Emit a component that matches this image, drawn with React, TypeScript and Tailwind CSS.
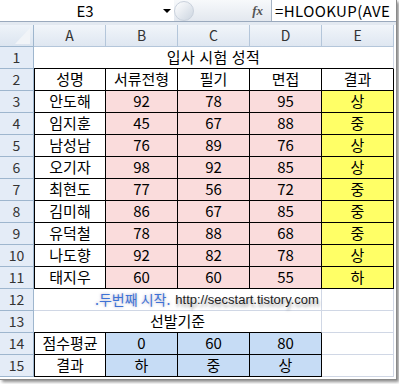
import React from "react";

const rows: [string, number, number, number, string][] = [
    ["안도해", 92, 78, 95, "상"],
    ["임지훈", 45, 67, 88, "중"],
    ["남성남", 76, 89, 76, "상"],
    ["오기자", 98, 92, 85, "상"],
    ["최현도", 77, 56, 72, "중"],
    ["김미해", 86, 67, 85, "중"],
    ["유덕철", 78, 88, 68, "중"],
    ["나도향", 92, 82, 78, "상"],
    ["태지우", 60, 60, 55, "하"],
];

const rowHead = "h-[22px] flex items-center justify-center bg-[#e4ecf7] border-r border-b border-[#9eb6ce] text-[14px] text-[#333]";
const grid = "h-[22px] flex items-center justify-center border-r border-b border-[#d0d7e5]";
const boxed = "h-[22px] flex items-center justify-center border-r border-b border-black text-[15px]";

const RowNum = ({ n }: { n: number }) => <div className={rowHead}>{n}</div>;

const FormulaBar = () => (
    <div className="flex h-[22px] border-b border-[#9aa9bd] bg-white">
        <div className="w-[174px] flex items-center">
            <div className="w-[160px] pl-[10px] text-center text-[15px] leading-none">E3</div>
            <div className="w-[14px] flex items-center">
                <div className="ml-[3px] w-0 h-0 border-l-[4px] border-r-[4px] border-t-[4px] border-l-transparent border-r-transparent border-t-black" />
            </div>
        </div>
        <div className="w-[97px] flex items-center bg-gradient-to-b from-[#f7f9fb] to-[#e3e8ef]">
            <div className="w-[20px] h-[20px] rounded-full border border-[#c9d1dc] bg-gradient-to-br from-[#ffffff] to-[#ccd5e0]" />
            <div className="flex-1 pr-[8px] text-right font-['Liberation_Serif',serif] italic font-bold text-[13px] text-[#555]">
                fx
            </div>
        </div>
        <div className="flex-1 border-l border-[#a5b3c4] pl-[3px] flex items-center overflow-hidden whitespace-nowrap text-[15px] leading-none tracking-[0.4px]">
            =HLOOKUP(AVE
        </div>
    </div>
);

export default function App() {
    return (
        <div className="w-[399px] h-[384px] bg-white font-['Noto_Sans_CJK_KR',sans-serif] text-black">
            <div className="w-[397px] h-[380px] border-r border-b border-[#8a8a8a] shadow-[2px_2px_3px_rgba(0,0,0,0.45)] bg-white overflow-hidden">
                <FormulaBar />
                <div className="h-[3px] bg-[#e3e9f1]" />
                <div className="grid grid-cols-[34px_repeat(5,72px)] w-[394px]">
                    {/* column headers */}
                    <div className="h-[22px] relative bg-gradient-to-b from-[#eef3f9] to-[#dce5f0] border-r border-b border-[#9eb6ce]">
                        <svg width="34" height="22" className="absolute left-0 top-0">
                            <polygon points="30,3 30,19 15,19" fill="#f1f4f8" />
                        </svg>
                    </div>
                    {["A", "B", "C", "D", "E"].map((c) => (
                        <div
                            key={c}
                            className="h-[22px] flex items-center justify-center bg-gradient-to-b from-[#f1f5fa] to-[#dfe7f1] border-r border-b border-[#b4c6da] text-[14px] text-[#333]"
                        >
                            {c}
                        </div>
                    ))}

                    <RowNum n={1} />
                    <div className="col-span-5 h-[22px] flex items-center justify-center border-r border-b border-r-[#d0d7e5] border-b-black text-[15px] tracking-[0.5px]">
                        입사 시험 성적
                    </div>

                    <RowNum n={2} />
                    <div className={`${boxed} border-l`}>성명</div>
                    <div className={boxed}>서류전형</div>
                    <div className={boxed}>필기</div>
                    <div className={boxed}>면접</div>
                    <div className={boxed}>결과</div>

                    {rows.map(([name, a, b, c, res], i) => (
                        <React.Fragment key={name}>
                            <RowNum n={i + 3} />
                            <div className={`${boxed} border-l`}>{name}</div>
                            <div className={`${boxed} bg-[#fadcdc]`}>{a}</div>
                            <div className={`${boxed} bg-[#fadcdc]`}>{b}</div>
                            <div className={`${boxed} bg-[#fadcdc]`}>{c}</div>
                            <div className={`${boxed} bg-[#ffff66]`}>{res}</div>
                        </React.Fragment>
                    ))}

                    <RowNum n={12} />
                    <div className={`${grid} col-span-4 justify-start pl-[61px] whitespace-nowrap`}>
                        <span className="text-[14px] text-[#3d72d6] [text-shadow:0_0_3px_rgba(120,120,160,0.6)]">.두번째 시작.</span>
                        <span className="ml-[5px] font-['Liberation_Sans',sans-serif] text-[13px] text-[#222] [text-shadow:1px_3px_3px_rgba(0,0,0,0.35)]">
                            http://secstart.tistory.com
                        </span>
                    </div>
                    <div className={grid} />

                    <RowNum n={13} />
                    <div className="col-span-4 h-[22px] flex items-center justify-center border-r border-b border-r-[#d0d7e5] border-b-black text-[15px]">
                        선발기준
                    </div>
                    <div className={grid} />

                    <RowNum n={14} />
                    <div className={`${boxed} border-l`}>점수평균</div>
                    <div className={`${boxed} bg-[#c6dcf5]`}>0</div>
                    <div className={`${boxed} bg-[#c6dcf5]`}>60</div>
                    <div className={`${boxed} bg-[#c6dcf5]`}>80</div>
                    <div className={grid} />

                    <RowNum n={15} />
                    <div className={`${boxed} border-l`}>결과</div>
                    <div className={`${boxed} bg-[#c6dcf5]`}>하</div>
                    <div className={`${boxed} bg-[#c6dcf5]`}>중</div>
                    <div className={`${boxed} bg-[#c6dcf5]`}>상</div>
                    <div className={grid} />
                </div>
            </div>
        </div>
    );
}
